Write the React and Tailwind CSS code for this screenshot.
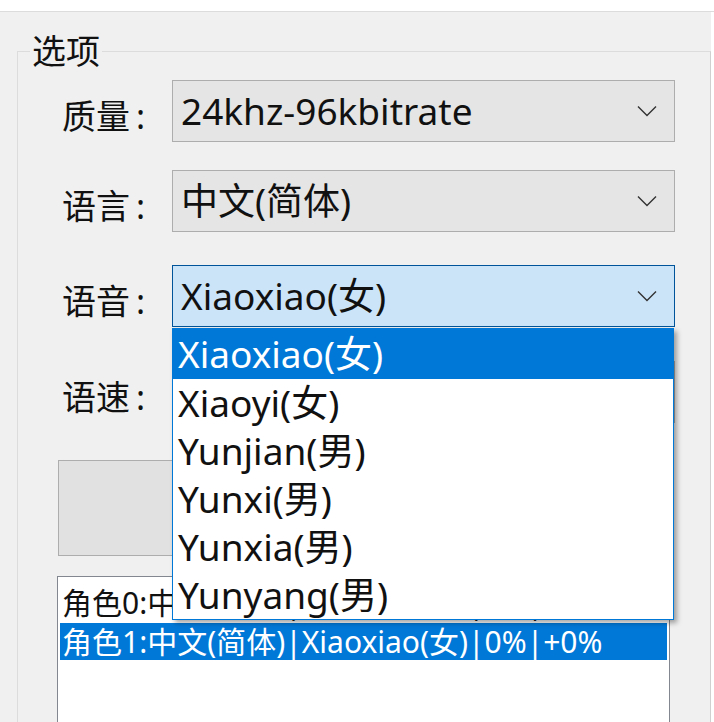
import React from "react";

const FONT = { fontFamily: '"Noto Sans", "Noto Sans CJK SC", sans-serif' };

function Chevron() {
  return (
    <svg width="22" height="12" viewBox="0 0 22 12" className="shrink-0">
      <polyline points="2,1.5 11,10.5 20,1.5" fill="none" stroke="#333" strokeWidth="1.4" />
    </svg>
  );
}

function Row({ label, value, active, className }) {
  return (
    <div className={"flex items-center " + (className || "")}>
      <div className="w-[110px] text-[34px] leading-[40px] text-[#111] pt-[10px] whitespace-nowrap">
        {label.slice(0, 2)}
        <span className="ml-[6px]">:</span>
      </div>
      <div
        className={
          "flex-1 h-[62px] flex items-center justify-between pl-[8px] pr-[16px] border " +
          (active ? "bg-[#cce4f7] border-[#005499]" : "bg-[#e5e5e5] border-[#adadad]")
        }
      >
        <span className="text-[37px] leading-[44px] text-[#111]">{value}</span>
        <Chevron />
      </div>
    </div>
  );
}

const items = ["Xiaoxiao(女)", "Xiaoyi(女)", "Yunjian(男)", "Yunxi(男)", "Yunxia(男)", "Yunyang(男)"];

export default function App() {
  return (
    <div className="w-[714px] h-[722px] bg-[#f0f0f0] overflow-hidden flex flex-col" style={FONT}>
      <div className="h-[12px] bg-white border-b border-[#dcdcdc] shrink-0" />
      <div className="flex flex-1">
        <div className="flex-1 pl-[17px] pt-[22px]">
          <fieldset className="border border-[#dcdcdc] border-r-[#d0d0d0] h-[700px] relative">
            <legend className="ml-[12px] px-[2px] text-[34px] leading-[34px] text-[#111]">选项</legend>
            <div className="pl-[44px] pr-[35px] pt-[12px]">
              <Row label="质量:" value="24khz-96kbitrate" />
              <Row label="语言:" value="中文(简体)" className="mt-[28px]" />
              <Row label="语音:" value="Xiaoxiao(女)" active className="mt-[33px]" />
              <Row label="语速:" value="0%" className="mt-[34px]" />
            </div>
            <div className="ml-[40px] mt-[37px] w-[300px] h-[96px] bg-[#e1e1e1] border border-[#adadad]" />
            <div className="ml-[39px] mr-[40px] mt-[20px] h-[200px] bg-white border border-[#828790] pt-[5px] px-[2px]">
              <div className="h-[41px] flex items-center pl-[2px] text-[30px] text-[#111] whitespace-nowrap">角色0:中文(简体)|Xiaoxiao(女)|0%|+0%</div>
              <div className="h-[37px] flex items-center pl-[2px] text-[30px] text-white bg-[#0078d7] whitespace-nowrap">角色1:中文(简体)|Xiaoxiao(女)|0%|+0%</div>
            </div>
            <div className="absolute left-[154px] top-[260px] w-[502px] bg-white border border-[#0078d7] shadow-[3px_3px_5px_rgba(0,0,0,0.35)]">
              {items.map((t, i) => (
                <div
                  key={t}
                  className={
                    "flex items-center pl-[5px] text-[37px] leading-[44px] " +
                    (i === 0 ? "h-[50px] bg-[#0078d7] text-white" : "h-[48px] text-[#111]")
                  }
                >
                  {t}
                </div>
              ))}
            </div>
          </fieldset>
        </div>
        <div className="w-[3px] bg-white shrink-0" />
      </div>
    </div>
  );
}
